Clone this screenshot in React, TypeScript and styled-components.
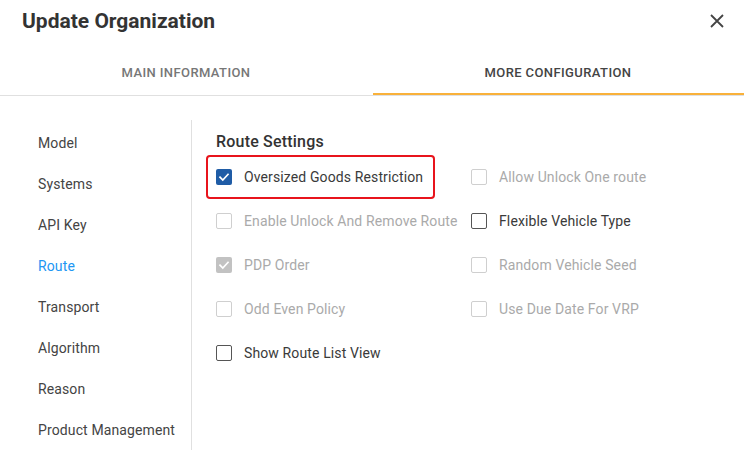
import React from "react";
import styled, { createGlobalStyle } from "styled-components";

const Global = createGlobalStyle`
  html, body { margin: 0; padding: 0; background: #fff; }
  body { font-family: Roboto, "Noto Sans", Arial, sans-serif; color: #333; }
  * { box-sizing: border-box; }
`;

const Dialog = styled.div`
  width: 744px;
  height: 450px;
  overflow: hidden;
  background: #fff;
  display: flex;
  flex-direction: column;
`;

const Header = styled.div`
  height: 51px;
  display: flex;
  align-items: flex-start;
  justify-content: space-between;
  padding: 9px 20px 0 22px;
`;

const Title = styled.h1`
  margin: 0;
  font-size: 21px;
  line-height: 24px;
  font-weight: 700;
  color: #333;
`;

const CloseButton = styled.button`
  border: none;
  background: none;
  padding: 0;
  margin-top: 5px;
  width: 14px;
  height: 14px;
  display: flex;
  cursor: pointer;
`;

const Tabs = styled.div`
  display: flex;
  height: 49px;
  border-bottom: 1px solid #e0e0e0;
`;

const Tab = styled.div<{ $active?: boolean }>`
  position: relative;
  flex: 1;
  display: flex;
  align-items: center;
  justify-content: center;
  font-size: 13px;
  font-weight: 500;
  letter-spacing: 0.4px;
  text-transform: uppercase;
  color: ${(p) => (p.$active ? "#444" : "#777")};
  &::after {
    content: "";
    display: ${(p) => (p.$active ? "block" : "none")};
    position: absolute;
    left: 1px;
    right: 0;
    bottom: 0;
    height: 2px;
    background: #f9b13a;
  }
`;

const Body = styled.div`
  flex: 1;
  display: flex;
  padding-top: 24px;
`;

const Sidebar = styled.nav`
  width: 192px;
  border-right: 1px solid #e0e0e0;
  display: flex;
  flex-direction: column;
  padding-top: 2px;
`;

const NavItem = styled.div<{ $active?: boolean }>`
  height: 41px;
  display: flex;
  align-items: center;
  padding-left: 38px;
  font-size: 14px;
  letter-spacing: 0.12px;
  color: ${(p) => (p.$active ? "#2196f3" : "#444")};
  white-space: nowrap;
`;

const Content = styled.section`
  flex: 1;
  padding-left: 14px;
`;

const Heading = styled.h2`
  margin: 11px 0 2px 10px;
  font-size: 16px;
  line-height: 22px;
  font-weight: 500;
  letter-spacing: 0.2px;
  color: #333;
`;

const Grid = styled.div`
  display: grid;
  grid-template-columns: 255px 255px;
  grid-auto-rows: 44px;
`;

const Option = styled.label<{ $highlight?: boolean; $disabled?: boolean }>`
  justify-self: start;
  display: inline-flex;
  align-items: center;
  gap: 12px;
  height: 44px;
  padding: 0 10px 0 8px;
  border: 2px solid ${(p) => (p.$highlight ? "#e8141c" : "transparent")};
  border-radius: 4px;
  font-size: 14px;
  letter-spacing: 0.12px;
  color: ${(p) => (p.$disabled ? "#aaa" : "#3a3a3a")};
  white-space: nowrap;
`;

const Box = styled.span<{ $checked?: boolean; $disabled?: boolean }>`
  width: 16px;
  height: 16px;
  flex: none;
  border-radius: 2px;
  display: flex;
  align-items: center;
  justify-content: center;
  background: ${(p) =>
    p.$checked ? (p.$disabled ? "#c2c2c2" : "#1f5ca6") : "transparent"};
  border: ${(p) =>
    p.$checked
      ? "none"
      : p.$disabled
      ? "1.5px solid #cfcfcf"
      : "1.5px solid #555"};
`;

const Check = () => (
  <svg width="12" height="12" viewBox="0 0 12 12" fill="none">
    <path d="M2 6.2 L4.8 9 L10 3.4" stroke="#fff" strokeWidth="1.7" strokeLinecap="square" />
  </svg>
);

type Opt = { label: string; checked?: boolean; disabled?: boolean; highlight?: boolean };

const options: Opt[] = [
  { label: "Oversized Goods Restriction", checked: true, highlight: true },
  { label: "Allow Unlock One route", disabled: true },
  { label: "Enable Unlock And Remove Route", disabled: true },
  { label: "Flexible Vehicle Type" },
  { label: "PDP Order", checked: true, disabled: true },
  { label: "Random Vehicle Seed", disabled: true },
  { label: "Odd Even Policy", disabled: true },
  { label: "Use Due Date For VRP", disabled: true },
  { label: "Show Route List View" },
];

const nav = ["Model", "Systems", "API Key", "Route", "Transport", "Algorithm", "Reason", "Product Management"];

export default function App() {
  return (
    <>
      <Global />
      <Dialog>
        <Header>
          <Title>Update Organization</Title>
          <CloseButton aria-label="Close">
            <svg width="14" height="14" viewBox="0 0 14 14">
              <path d="M1 1 L13 13 M13 1 L1 13" stroke="#444" strokeWidth="1.8" />
            </svg>
          </CloseButton>
        </Header>
        <Tabs>
          <Tab>Main Information</Tab>
          <Tab $active>More Configuration</Tab>
        </Tabs>
        <Body>
          <Sidebar>
            {nav.map((n) => (
              <NavItem key={n} $active={n === "Route"}>
                {n}
              </NavItem>
            ))}
          </Sidebar>
          <Content>
            <Heading>Route Settings</Heading>
            <Grid>
              {options.map((o) => (
                <Option key={o.label} $highlight={o.highlight} $disabled={o.disabled}>
                  <Box $checked={o.checked} $disabled={o.disabled}>
                    {o.checked && <Check />}
                  </Box>
                  {o.label}
                </Option>
              ))}
            </Grid>
          </Content>
        </Body>
      </Dialog>
    </>
  );
}
